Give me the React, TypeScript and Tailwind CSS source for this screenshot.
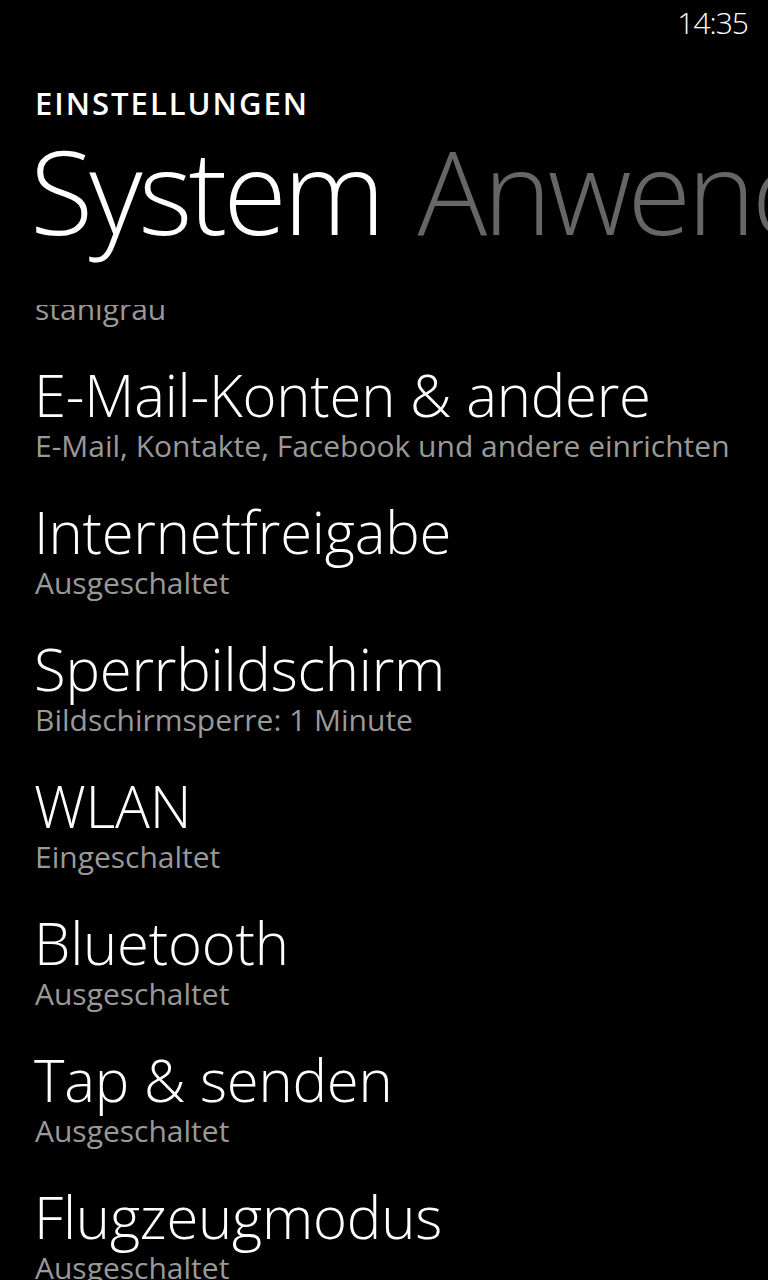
import React from 'react';

const font = { fontFamily: '"Open Sans", "Noto Sans", "DejaVu Sans", sans-serif' };

interface SettingItem {
    title: string;
    subtitle: string;
}

const items: SettingItem[] = [
    { title: 'Design', subtitle: 'stahlgrau' },
    { title: 'E-Mail-Konten & andere', subtitle: 'E-Mail, Kontakte, Facebook und andere einrichten' },
    { title: 'Internetfreigabe', subtitle: 'Ausgeschaltet' },
    { title: 'Sperrbildschirm', subtitle: 'Bildschirmsperre: 1 Minute' },
    { title: 'WLAN', subtitle: 'Eingeschaltet' },
    { title: 'Bluetooth', subtitle: 'Ausgeschaltet' },
    { title: 'Tap & senden', subtitle: 'Ausgeschaltet' },
    { title: 'Flugzeugmodus', subtitle: 'Ausgeschaltet' },
    { title: 'Akkusparmodus', subtitle: 'Ausgeschaltet' },
];

const SettingRow: React.FC<SettingItem> = ({ title, subtitle }) => (
    <div className="h-[137px] pl-[34px] whitespace-nowrap">
        <div className="text-[58px] leading-[64px] font-light text-white tracking-[-0.2px]">{title}</div>
        <div className="mt-[1px] pl-[1px] text-[30px] leading-[36px] text-[#999999]">{subtitle}</div>
    </div>
);

export default function App() {
    return (
        <div className="w-[768px] h-[1280px] bg-black overflow-hidden flex flex-col" style={font}>
            {/* status bar */}
            <div className="h-[48px] shrink-0 flex justify-end pr-[20px]">
                <span className="text-[30px] leading-[46px] text-white font-light tracking-[-1px]">14:35</span>
            </div>

            {/* app title */}
            <div className="mt-[35px] pl-[35px] text-[31px] leading-[40px] font-semibold text-white tracking-[2px] shrink-0">
                EINSTELLUNGEN
            </div>

            {/* pivot headers */}
            <div className="mt-[7px] h-[120px] shrink-0 pl-[30px] flex gap-[36px] whitespace-nowrap text-[116px] leading-[120px] font-light tracking-[-4px]">
                <span className="text-white">System</span>
                <span className="text-[#666666]">Anwendungen</span>
            </div>

            {/* scrolled list */}
            <div className="mt-[55px] flex-1 overflow-hidden">
                <div className="-mt-[79px]">
                    {items.map(item => (
                        <SettingRow key={item.title} {...item} />
                    ))}
                </div>
            </div>
        </div>
    );
}
